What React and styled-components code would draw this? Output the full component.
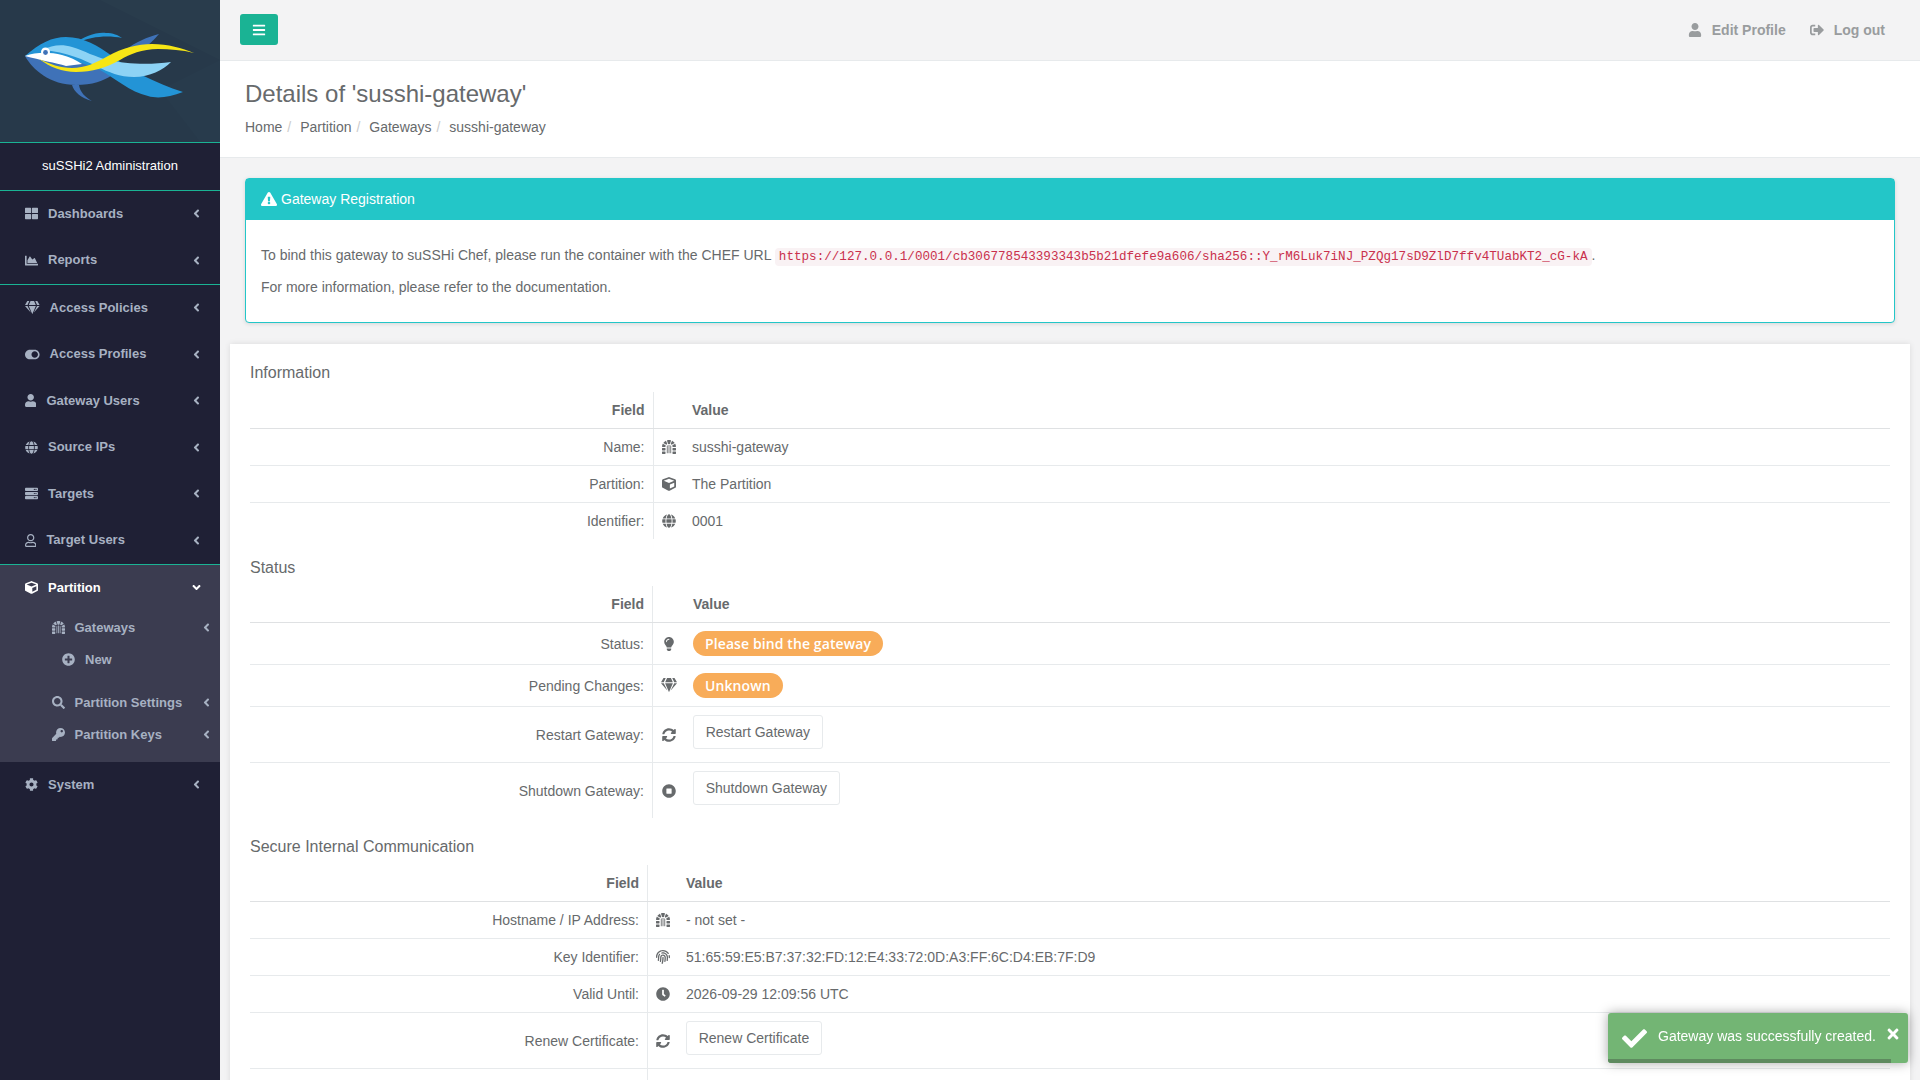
import styled, { createGlobalStyle } from "styled-components";
import {
  FaThLarge, FaChartArea, FaGem, FaToggleOn, FaUser, FaRegUser, FaGlobe, FaServer, FaCube,
  FaDungeon, FaPlusCircle, FaSearch, FaKey, FaCog, FaAngleLeft, FaAngleDown, FaBars,
  FaSignOutAlt, FaExclamationTriangle, FaLightbulb, FaSyncAlt, FaStopCircle, FaFingerprint,
  FaClock, FaCheck, FaTimes,
} from "react-icons/fa";

const GlobalStyle = createGlobalStyle`
  html, body { margin: 0; padding: 0; height: 100%; overflow: hidden; }
  body {
    font-family: "Liberation Sans", Arial, sans-serif;
    font-size: 14px;
    line-height: 20px;
    color: #676a6c;
    background: #f3f3f4;
  }
  * { box-sizing: border-box; }
`;

function FishLogo() {
  return (
    <LogoSvg viewBox="0 0 220 142">
      <rect width="220" height="142" fill="#27394a" />
      <polygon points="100,0 220,0 220,60" fill="#293c4c" />
      <polygon points="160,90 220,60 220,142 200,142" fill="#283b4c" />
      {/* dorsal and belly fins */}
      <path d="M75 44 C84 36 96 32 106 33 C113 33 118 35 122 38 C113 36 101 36 92 38 C86 39 81 41 75 44Z" fill="#2394d6" />
      <path d="M125 50 C136 42 147 37 159 34 C153 41 147 46 142 50Z" fill="#3f72b8" />
      <path d="M72 85 C74 92 81 98 92 101 C85 97 80 92 79 85Z" fill="#3f72b8" />
      {/* lower body */}
      <path d="M25 56 C33 70 50 85 76 85 C92 85 104 81 112 75 L96 50 L40 50Z" fill="#3f72b8" />
      {/* upper body running into the tail */}
      <path d="M25 56 C40 43 52 37 66 37 C84 37 98 46 112 56 C130 70 155 83 183 92 C170 97 158 99 148 96 C130 92 115 78 100 70 C84 62 60 58 25 56Z" fill="#2394d6" />
      {/* light blue band */}
      <path d="M42 50 C52 45 62 44 72 47 C85 51 95 57 108 60 C125 64 150 65 171 62 C163 70 150 77 134 77 C120 77 108 72 98 67 C84 60 68 52 42 50Z" fill="#8dd3f5" />
      <path d="M25 56 C36 52 50 52 62 55 C70 57 76 60 82 64 L66 66 C56 63 40 60 25 56Z" fill="#ffffff" />
      {/* yellow stripe */}
      <path d="M39 59 C50 64 60 68 72 68 C85 68 96 63 108 56 C122 48 138 44 152 44 C168 44 182 48 194 53 C182 50 170 49 158 49 C142 49 130 54 120 60 C106 68 92 72 76 72 C62 72 50 67 39 59Z" fill="#f7e615" />
      <circle cx="45.5" cy="52" r="4.5" fill="#ffffff" />
      <circle cx="45.5" cy="52.5" r="2.4" fill="#3f72b8" />
    </LogoSvg>
  );
}

function NavItem({ icon: Icon, w = 13, label, open, active }) {
  const Arrow = open ? FaAngleDown : FaAngleLeft;
  return (
    <NavRow $active={active}>
      <NavIcon $w={w}><Icon /></NavIcon>
      <NavLabel>{label}</NavLabel>
      <Arrow />
    </NavRow>
  );
}

function SubItem({ icon: Icon, label, arrow, deep }) {
  return (
    <SubRow $deep={deep}>
      <NavIcon $w={13}><Icon /></NavIcon>
      <NavLabel>{label}</NavLabel>
      {arrow && <FaAngleLeft />}
    </SubRow>
  );
}

function DetailRow({ label, icon: Icon, wide, children }) {
  return (
    <tr>
      <FieldCell>{label}</FieldCell>
      <IconCell $wide={wide}><Icon /></IconCell>
      <ValueCell>{children}</ValueCell>
    </tr>
  );
}

function DetailTable({ fieldWidth, iconWidth, children }) {
  return (
    <Table>
      <colgroup>
        <col style={{ width: fieldWidth }} />
        <col style={{ width: iconWidth }} />
        <col />
      </colgroup>
      <thead>
        <tr>
          <FieldHead>Field</FieldHead>
          <PlainHead />
          <PlainHead>Value</PlainHead>
        </tr>
      </thead>
      <tbody>{children}</tbody>
    </Table>
  );
}

export default function App() {
  return (
    <>
      <GlobalStyle />
      <Page>
        <Sidebar>
          <FishLogo />
          <BrandTitle>suSSHi2 Administration</BrandTitle>
          <NavGroup>
            <NavItem icon={FaThLarge} label="Dashboards" />
            <NavItem icon={FaChartArea} label="Reports" />
          </NavGroup>
          <NavGroup>
            <NavItem icon={FaGem} w={14.6} label="Access Policies" />
            <NavItem icon={FaToggleOn} w={14.6} label="Access Profiles" />
            <NavItem icon={FaUser} w={11.4} label="Gateway Users" />
            <NavItem icon={FaGlobe} label="Source IPs" />
            <NavItem icon={FaServer} label="Targets" />
            <NavItem icon={FaRegUser} w={11.4} label="Target Users" />
          </NavGroup>
          <ActiveGroup>
            <NavItem icon={FaCube} label="Partition" open active />
            <SubItem icon={FaDungeon} label="Gateways" arrow />
            <SubItem icon={FaPlusCircle} label="New" deep />
            <SubSpacer />
            <SubItem icon={FaSearch} label="Partition Settings" arrow />
            <SubItem icon={FaKey} label="Partition Keys" arrow />
          </ActiveGroup>
          <NavItem icon={FaCog} label="System" />
        </Sidebar>

        <Main>
          <TopBar>
            <MenuButton><FaBars /></MenuButton>
            <TopLinks>
              <TopLink><FaUser />Edit Profile</TopLink>
              <TopLink><FaSignOutAlt />Log out</TopLink>
            </TopLinks>
          </TopBar>

          <PageHeading>
            <PageTitle>Details of 'susshi-gateway'</PageTitle>
            <Breadcrumb>
              <li>Home</li>
              <li>Partition</li>
              <li>Gateways</li>
              <li>susshi-gateway</li>
            </Breadcrumb>
          </PageHeading>

          <Content>
            <AlertPanel>
              <AlertHead><FaExclamationTriangle />Gateway Registration</AlertHead>
              <AlertBody>
                <p>
                  To bind this gateway to suSSHi Chef, please run the container with the CHEF URL{" "}
                  <Code>https://127.0.0.1/0001/cb306778543393343b5b21dfefe9a606/sha256::Y_rM6Luk7iNJ_PZQg17sD9ZlD7ffv4TUabKT2_cG-kA</Code>.
                </p>
                <p>For more information, please refer to the documentation.</p>
              </AlertBody>
            </AlertPanel>

            <DetailsPanel>
              <SectionTitle>Information</SectionTitle>
              <DetailTable fieldWidth={403} iconWidth={31}>
                <DetailRow label="Name:" icon={FaDungeon}>susshi-gateway</DetailRow>
                <DetailRow label="Partition:" icon={FaCube}>The Partition</DetailRow>
                <DetailRow label="Identifier:" icon={FaGlobe}>0001</DetailRow>
              </DetailTable>

              <SectionTitle>Status</SectionTitle>
              <DetailTable fieldWidth={402.5} iconWidth={32.5}>
                <DetailRow label="Status:" icon={FaLightbulb}><Badge>Please bind the gateway</Badge></DetailRow>
                <DetailRow label="Pending Changes:" icon={FaGem} wide><Badge>Unknown</Badge></DetailRow>
                <DetailRow label="Restart Gateway:" icon={FaSyncAlt}><WhiteButton>Restart Gateway</WhiteButton></DetailRow>
                <DetailRow label="Shutdown Gateway:" icon={FaStopCircle}><WhiteButton>Shutdown Gateway</WhiteButton></DetailRow>
              </DetailTable>

              <SectionTitle>Secure Internal Communication</SectionTitle>
              <DetailTable fieldWidth={397.5} iconWidth={30.5}>
                <DetailRow label="Hostname / IP Address:" icon={FaDungeon}>- not set -</DetailRow>
                <DetailRow label="Key Identifier:" icon={FaFingerprint}>51:65:59:E5:B7:37:32:FD:12:E4:33:72:0D:A3:FF:6C:D4:EB:7F:D9</DetailRow>
                <DetailRow label="Valid Until:" icon={FaClock}>2026-09-29 12:09:56 UTC</DetailRow>
                <DetailRow label="Renew Certificate:" icon={FaSyncAlt}><WhiteButton>Renew Certificate</WhiteButton></DetailRow>
                <DetailRow label={"\u00a0"} icon={FaStopCircle}>&nbsp;</DetailRow>
              </DetailTable>
            </DetailsPanel>
          </Content>
        </Main>

        <Toast>
          <FaCheck />
          <ToastText>Gateway was successfully created.</ToastText>
          <ToastClose><FaTimes /></ToastClose>
          <ToastProgress />
        </Toast>
      </Page>
    </>
  );
}

const Page = styled.div`
  display: flex;
  width: 1920px;
  height: 1080px;
  overflow: hidden;
`;

const Sidebar = styled.nav`
  flex: 0 0 220px;
  background: #1f2035;
  color: #a7b1c2;
  font-size: 13px;
  font-weight: 700;
`;

const LogoSvg = styled.svg`
  display: block;
  width: 220px;
  height: 142px;
`;

const BrandTitle = styled.div`
  height: 49px;
  padding-bottom: 2px;
  border-top: 1px solid #1ab394;
  border-bottom: 1px solid #1ab394;
  display: flex;
  align-items: center;
  justify-content: center;
  color: #fff;
  font-weight: 400;
`;

const NavGroup = styled.div`
  border-bottom: 1px solid #1ab394;
`;

const ActiveGroup = styled.div`
  background: #3b3c50;
  padding-bottom: 11.5px;
`;

const NavRow = styled.div`
  height: 46.5px;
  padding: 0 17px 1px 25px;
  display: flex;
  align-items: center;
  gap: 10px;
  color: ${(p) => (p.$active ? "#fff" : "#a7b1c2")};
  > svg { height: 13px; width: 13px; flex: none; }
`;

const NavIcon = styled.span`
  flex: none;
  display: flex;
  width: ${(p) => p.$w}px;
  svg { width: 100%; height: 13px; }
`;

const NavLabel = styled.span`
  flex: 1;
  white-space: nowrap;
`;

const SubRow = styled.div`
  height: 32px;
  padding: 0 7px 0 ${(p) => (p.$deep ? "62px" : "52px")};
  display: flex;
  align-items: center;
  gap: ${(p) => (p.$deep ? "10px" : "9.5px")};
  > svg { height: 13px; width: 13px; flex: none; }
`;

const SubSpacer = styled.div`
  height: 11px;
`;

const Main = styled.main`
  flex: 1;
  min-width: 0;
`;

const TopBar = styled.header`
  height: 61px;
  padding: 14px 35px 0 20px;
  border-bottom: 1px solid #e7eaec;
  display: flex;
  justify-content: space-between;
  align-items: flex-start;
`;

const MenuButton = styled.button`
  width: 38px;
  height: 31px;
  padding: 0;
  border: 0;
  border-radius: 3px;
  background: #1ab394;
  color: #fff;
  font-size: 14px;
  display: flex;
  align-items: center;
  justify-content: center;
`;

const TopLinks = styled.div`
  display: flex;
  gap: 24px;
  margin-top: 6px;
`;

const TopLink = styled.a`
  display: flex;
  align-items: center;
  gap: 10px;
  color: #999c9e;
  font-weight: 700;
  svg { height: 14px; width: 14px; }
`;

const PageHeading = styled.section`
  height: 97px;
  padding: 20px 25px 0;
  background: #fff;
  border-bottom: 1px solid #e7eaec;
`;

const PageTitle = styled.h2`
  margin: 0;
  font-size: 24px;
  font-weight: 400;
  line-height: 26px;
`;

const Breadcrumb = styled.ol`
  margin: 10px 0 0;
  padding: 0;
  list-style: none;
  display: flex;
  li + li::before {
    content: "/";
    color: #ccc;
    padding: 0 8.9px 0 5px;
  }
`;

const Content = styled.div`
  padding: 20px 10px 0;
`;

const AlertPanel = styled.section`
  margin: 0 15px;
  border: 1px solid #23c6c8;
  border-radius: 4px;
  background: #fff;
  box-shadow: 0 1px 4px rgba(0, 0, 0, 0.12);
`;

const AlertHead = styled.div`
  height: 41px;
  padding: 0 15px 1px;
  background: #23c6c8;
  color: #fff;
  display: flex;
  align-items: center;
  gap: 4px;
  svg { height: 16px; width: 16px; }
`;

const AlertBody = styled.div`
  padding: 25px 15px 15px;
  p { margin: 0 0 10px; }
`;

const Code = styled.code`
  font-family: "Liberation Mono", monospace;
  font-size: 12.6px;
  padding: 2px 4px;
  color: #c9304c;
  background: #f9f2f4;
  border-radius: 4px;
`;

const DetailsPanel = styled.section`
  margin-top: 21px;
  padding: 19px 20px 0;
  background: #fff;
  box-shadow: 0 0 6px rgba(0, 0, 0, 0.1);
`;

const SectionTitle = styled.h3`
  margin: 0 0 8px;
  font-size: 16px;
  font-weight: 400;
  line-height: 20px;
  &:first-child { margin-bottom: 9px; }
`;

const Table = styled.table`
  width: 100%;
  table-layout: fixed;
  border-collapse: collapse;
  margin-bottom: 19px;
`;

const FieldHead = styled.th`
  padding: 8px;
  text-align: right;
  border-right: 1px solid #e7eaec;
  border-bottom: 1px solid #dfe1e3;
`;

const PlainHead = styled.th`
  padding: 8px;
  text-align: left;
  border-bottom: 1px solid #dfe1e3;
`;

const FieldCell = styled.td`
  padding: 8px;
  text-align: right;
  border-right: 1px solid #e7eaec;
  border-top: 1px solid #e7eaec;
`;

const IconCell = styled.td`
  padding: 8px 0;
  text-align: center;
  border-top: 1px solid #e7eaec;
  svg {
    height: ${(p) => (p.$wide ? "16px" : "14px")};
    width: ${(p) => (p.$wide ? "16px" : "14px")};
    vertical-align: -2px;
  }
`;

const ValueCell = styled.td`
  padding: 8px;
  border-top: 1px solid #e7eaec;
`;

const Badge = styled.span`
  display: inline-block;
  height: 25px;
  padding: 0 12px;
  border-radius: 13px;
  background: #f8ac59;
  color: #fff;
  font-family: "Open Sans", sans-serif;
  font-size: 14px;
  font-weight: 600;
  letter-spacing: 0.1px;
  line-height: 25px;
  vertical-align: top;
`;

const WhiteButton = styled.button`
  display: block;
  height: 34px;
  margin-bottom: 5px;
  padding: 0 11.7px;
  border: 1px solid #e7eaec;
  border-radius: 3px;
  background: #fff;
  color: #676a6c;
  font-family: inherit;
  font-size: 14px;
`;

const Toast = styled.div`
  position: fixed;
  left: 1608px;
  top: 1013px;
  width: 300px;
  height: 50px;
  padding: 0 7px 4px 14px;
  display: flex;
  align-items: center;
  background: #73b574;
  color: #fff;
  border-radius: 3px;
  box-shadow: 0 0 12px rgba(0, 0, 0, 0.35);
  overflow: hidden;
  > svg { height: 25px; width: 25px; flex: none; margin-right: 11px; margin-top: 5px; }
`;

const ToastText = styled.span`
  flex: 1;
  white-space: nowrap;
`;

const ToastClose = styled.span`
  display: flex;
  margin-top: -5px;
  font-size: 16px;
`;

const ToastProgress = styled.div`
  position: absolute;
  left: 0;
  bottom: 0;
  width: 283px;
  height: 4px;
  background: #5e8a5f;
`;
